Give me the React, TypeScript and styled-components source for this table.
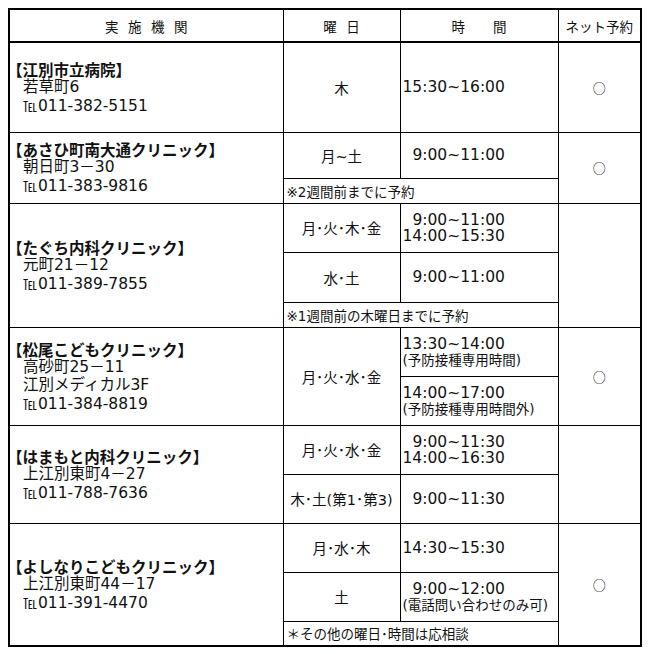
import styled, { createGlobalStyle } from 'styled-components';

const GlobalStyle = createGlobalStyle`
  html, body {
    overflow: hidden;
  }
  body {
    margin: 8px;
    background: #fff;
    color: #111;
    font-family: "DejaVu Sans", "Noto Sans CJK JP", sans-serif;
  }
`;

const Frame = styled.div`
  width: 630px;
  border: 2px solid #000;
`;

const Table = styled.table`
  width: 100%;
  table-layout: fixed;
  border-collapse: collapse;
  border-style: hidden;
  font-size: 15.5px;
`;

const Row = styled.tr<{ $h: number }>`
  height: ${({ $h }) => $h}px;
`;

const HeadCell = styled.th<{ $spacing?: number }>`
  border: 1px solid #000;
  border-bottom-width: 2px;
  padding: 0;
  font-family: "Noto Sans CJK JP", sans-serif;
  font-size: 13.5px;
  font-weight: 400;
  letter-spacing: ${({ $spacing = 0 }) => $spacing}px;
  text-indent: ${({ $spacing = 0 }) => $spacing}px;
  text-align: center;
`;

const Cell = styled.td<{ $align?: 'left' | 'center' }>`
  border: 1px solid #000;
  padding: 0 0 0 ${({ $align }) => ($align === 'left' ? '2px' : '0')};
  text-align: ${({ $align = 'center' }) => $align};
  vertical-align: middle;
`;

const DayCell = styled.td`
  border: 1px solid #000;
  padding: 0;
  font-size: 14.5px;
  text-align: center;
  vertical-align: middle;
`;

const InfoCell = styled.td`
  border: 1px solid #000;
  padding: 0 0 0 1px;
  vertical-align: middle;
  line-height: 18px;
`;

const NoteCell = styled.td`
  border: 1px solid #000;
  padding: 0 0 0 3px;
  font-size: 13.5px;
  vertical-align: middle;
`;

const Name = styled.div`
  font-family: "Noto Sans CJK JP", sans-serif;
  font-weight: 700;
  margin-left: -4px;
`;

const Line = styled.div`
  padding-left: 12px;
`;

const Tel = styled.span`
  font-family: "Noto Sans CJK JP", sans-serif;
  font-size: 14px;
  margin-right: 1px;
`;

const Time = styled.div<{ $pad?: boolean }>`
  line-height: 16px;
  padding-left: ${({ $pad }) => ($pad ? '0.64em' : '0')};
`;

const Sub = styled.div`
  font-size: 13.5px;
  line-height: 16px;
`;

const Mark = styled.span`
  font-family: "Noto Sans CJK JP", sans-serif;
  font-size: 13px;
`;

interface IClinic {
  name: string;
  address: string[];
  tel: string;
}

const Info = ({ name, address, tel }: IClinic): JSX.Element => (
  <>
    <Name>【{name}】</Name>
    {address.map((l) => (
      <Line key={l}>{l}</Line>
    ))}
    <Line>
      <Tel>℡</Tel>
      {tel}
    </Line>
  </>
);

export default function App(): JSX.Element {
  return (
    <>
      <GlobalStyle />
      <Frame>
        <Table>
          <colgroup>
            <col style={{ width: 273 }} />
            <col style={{ width: 117 }} />
            <col style={{ width: 158 }} />
            <col />
          </colgroup>
          <thead>
            <Row $h={32}>
              <HeadCell $spacing={9.5}>実施機関</HeadCell>
              <HeadCell $spacing={9.5}>曜日</HeadCell>
              <HeadCell $spacing={28}>時間</HeadCell>
              <HeadCell>ネット予約</HeadCell>
            </Row>
          </thead>
          <tbody>
            <Row $h={90}>
              <InfoCell>
                <Info name="江別市立病院" address={['若草町6']} tel="011-382-5151" />
              </InfoCell>
              <DayCell>木</DayCell>
              <Cell $align="left">
                <Time>15:30~16:00</Time>
              </Cell>
              <Cell>
                <Mark>○</Mark>
              </Cell>
            </Row>

            <Row $h={46}>
              <InfoCell rowSpan={2}>
                <Info name="あさひ町南大通クリニック" address={['朝日町3－30']} tel="011-383-9816" />
              </InfoCell>
              <DayCell>月~土</DayCell>
              <Cell $align="left">
                <Time $pad>9:00~11:00</Time>
              </Cell>
              <Cell rowSpan={2}>
                <Mark>○</Mark>
              </Cell>
            </Row>
            <Row $h={25}>
              <NoteCell colSpan={2}>※2週間前までに予約</NoteCell>
            </Row>

            <Row $h={49}>
              <InfoCell rowSpan={3}>
                <Info name="たぐち内科クリニック" address={['元町21－12']} tel="011-389-7855" />
              </InfoCell>
              <DayCell>月･火･木･金</DayCell>
              <Cell $align="left">
                <Time $pad>9:00~11:00</Time>
                <Time>14:00~15:30</Time>
              </Cell>
              <Cell rowSpan={3} />
            </Row>
            <Row $h={50}>
              <DayCell>水･土</DayCell>
              <Cell $align="left">
                <Time $pad>9:00~11:00</Time>
              </Cell>
            </Row>
            <Row $h={25}>
              <NoteCell colSpan={2}>※1週間前の木曜日までに予約</NoteCell>
            </Row>

            <Row $h={49}>
              <InfoCell rowSpan={2}>
                <Info
                  name="松尾こどもクリニック"
                  address={['高砂町25－11', '江別メディカル3F']}
                  tel="011-384-8819"
                />
              </InfoCell>
              <DayCell rowSpan={2}>月･火･水･金</DayCell>
              <Cell $align="left">
                <Time>13:30~14:00</Time>
                <Sub>(予防接種専用時間)</Sub>
              </Cell>
              <Cell rowSpan={2}>
                <Mark>○</Mark>
              </Cell>
            </Row>
            <Row $h={49}>
              <Cell $align="left">
                <Time>14:00~17:00</Time>
                <Sub>(予防接種専用時間外)</Sub>
              </Cell>
            </Row>

            <Row $h={49}>
              <InfoCell rowSpan={2}>
                <Info name="はまもと内科クリニック" address={['上江別東町4－27']} tel="011-788-7636" />
              </InfoCell>
              <DayCell>月･火･水･金</DayCell>
              <Cell $align="left">
                <Time $pad>9:00~11:30</Time>
                <Time>14:00~16:30</Time>
              </Cell>
              <Cell rowSpan={2} />
            </Row>
            <Row $h={49}>
              <DayCell>木･土(第1･第3)</DayCell>
              <Cell $align="left">
                <Time $pad>9:00~11:30</Time>
              </Cell>
            </Row>

            <Row $h={49}>
              <InfoCell rowSpan={3}>
                <Info name="よしなりこどもクリニック" address={['上江別東町44－17']} tel="011-391-4470" />
              </InfoCell>
              <DayCell>月･水･木</DayCell>
              <Cell $align="left">
                <Time>14:30~15:30</Time>
              </Cell>
              <Cell rowSpan={3}>
                <Mark>○</Mark>
              </Cell>
            </Row>
            <Row $h={49}>
              <DayCell>土</DayCell>
              <Cell $align="left">
                <Time $pad>9:00~12:00</Time>
                <Sub>(電話問い合わせのみ可)</Sub>
              </Cell>
            </Row>
            <Row $h={24}>
              <NoteCell colSpan={2}>＊その他の曜日･時間は応相談</NoteCell>
            </Row>
          </tbody>
        </Table>
      </Frame>
    </>
  );
}
